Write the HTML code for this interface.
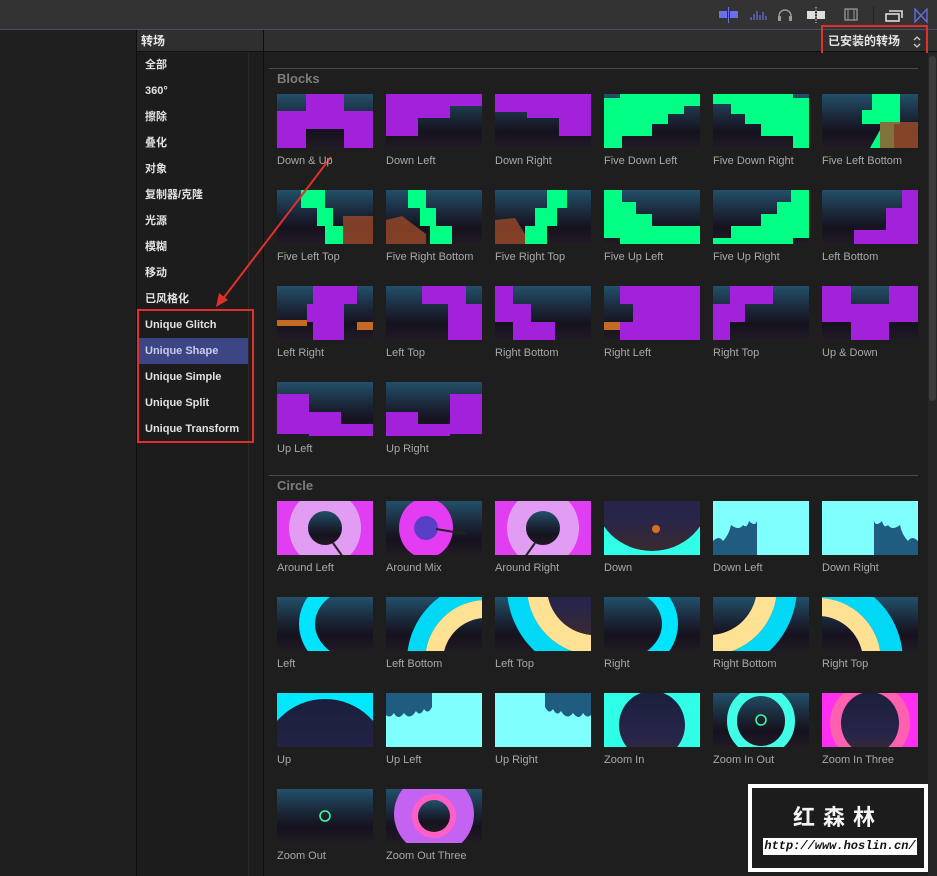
<!DOCTYPE html>
<html><head><meta charset="utf-8"><style>
*{margin:0;padding:0;box-sizing:border-box}
body{width:937px;height:876px;overflow:hidden;background:#1e1e1e;font-family:"Liberation Sans","Noto Sans CJK SC",sans-serif;position:relative}
.a{position:absolute}
.it{position:absolute;left:137px;width:111px;height:26px;line-height:26px;padding-left:8px;font-size:11px;color:#e2e2e2;font-weight:bold}
.lb{position:absolute;font-size:11px;color:#a9a9a9;white-space:nowrap}
</style></head><body>
<div class="a" style="left:0;top:0;width:937px;height:29px;background:#333"></div>
<div class="a" style="left:0;top:29px;width:937px;height:1px;background:#4a4d68"></div>
<svg class="a" style="left:715px;top:6px" width="222" height="18">
<g fill="#6a6ee8"><rect x="4" y="5" width="8" height="7"/><rect x="15" y="5" width="8" height="7"/><rect x="13" y="1" width="1" height="16"/></g>
<g stroke="#6a6ee8" stroke-width="1.2"><path d="M36 11v3M39 8v6M42 5v9M45 9v5M48 6v8M51 10v4"/></g>
<path d="M64 14v-4a6 6 0 0 1 12 0v4" stroke="#999" stroke-width="1.5" fill="none"/><rect x="63" y="10" width="3" height="5" fill="#999"/><rect x="74" y="10" width="3" height="5" fill="#999"/>
<g fill="#ddd"><rect x="92" y="5" width="8" height="8"/><rect x="102" y="5" width="8" height="8"/></g><path d="M101 1v16" stroke="#ddd" stroke-dasharray="1.5 1.5"/>
<rect x="130" y="3" width="12" height="11" fill="none" stroke="#999" stroke-width="1.3"/><path d="M133 3v11M139 3v11" stroke="#999"/>
<rect x="158" y="0" width="1" height="18" fill="#222"/>
<rect x="171" y="8" width="13" height="7" fill="none" stroke="#ddd" stroke-width="1.6"/><path d="M174 5h13v7" stroke="#ddd" stroke-width="1.6" fill="none"/>
<path d="M200 3v13l12-13v13z" stroke="#6a6ee8" stroke-width="1.3" fill="none"/>
</svg>
<div class="a" style="left:0;top:30px;width:136px;height:846px;background:#1f1f1f"></div>
<div class="a" style="left:136px;top:30px;width:1px;height:846px;background:#0e0e0e"></div>
<div class="a" style="left:137px;top:30px;width:126px;height:22px;background:#2f2f2f;border-bottom:1px solid #111;color:#e8e8e8;font-size:12px;line-height:22px;padding-left:4px;font-weight:bold">转场</div>
<div class="a" style="left:137px;top:53px;width:111px;height:823px;background:#1c1c1c"></div>
<div class="a" style="left:248px;top:53px;width:1px;height:823px;background:#2a2a2a"></div>
<div class="a" style="left:263px;top:30px;width:1px;height:846px;background:#0d0d0d"></div>
<div class="it" style="top:52px">全部</div>
<div class="it" style="top:78px">360°</div>
<div class="it" style="top:104px">擦除</div>
<div class="it" style="top:130px">叠化</div>
<div class="it" style="top:156px">对象</div>
<div class="it" style="top:182px">复制器/克隆</div>
<div class="it" style="top:208px">光源</div>
<div class="it" style="top:234px">模糊</div>
<div class="it" style="top:260px">移动</div>
<div class="it" style="top:286px">已风格化</div>
<div class="it" style="top:312px">Unique Glitch</div>
<div class="it" style="top:338px;background:#3c4685;color:#c8cce8">Unique Shape</div>
<div class="it" style="top:364px">Unique Simple</div>
<div class="it" style="top:390px">Unique Split</div>
<div class="it" style="top:416px">Unique Transform</div>
<div class="a" style="left:137px;top:309px;width:117px;height:134px;border:2px solid #e0302a"></div>
<div class="a" style="left:264px;top:30px;width:673px;height:22px;background:#2f2f2f;border-bottom:1px solid #111"></div>
<div class="a" style="left:828px;top:31px;font-size:12px;color:#e4e4e4;line-height:20px;font-weight:bold">已安装的转场</div>
<svg class="a" style="left:912px;top:34px" width="10" height="16"><path d="M2 6l3-3 3 3M2 10l3 3 3-3" stroke="#ccc" stroke-width="1.3" fill="none"/></svg>
<div class="a" style="left:821px;top:25px;width:107px;height:34px;border:2px solid #e0302a"></div>
<div class="a" style="left:264px;top:53px;width:664px;height:823px;background:#1e1e1e"></div>
<div class="a" style="left:928px;top:53px;width:9px;height:823px;background:#262626"></div>
<div class="a" style="left:929px;top:56px;width:7px;height:345px;background:#3c3c3c;border-radius:4px"></div>
<div class="a" style="left:269px;top:68px;width:649px;height:1px;background:#4a4a4a"></div>
<div class="a" style="left:277px;top:71px;font-size:13px;color:#7d7d7d;font-weight:bold">Blocks</div>
<div class="a" style="left:269px;top:475px;width:649px;height:1px;background:#4a4a4a"></div>
<div class="a" style="left:277px;top:478px;font-size:13px;color:#7d7d7d;font-weight:bold">Circle</div>

<svg class="a" style="left:0;top:0" width="937" height="876">
<defs>
<linearGradient id="n" x1="0" y1="0" x2="0" y2="1"><stop offset="0" stop-color="#22506a"/><stop offset=".45" stop-color="#1a2536"/><stop offset=".7" stop-color="#15121e"/><stop offset="1" stop-color="#221a24"/></linearGradient>
<linearGradient id="d" x1="0" y1="0" x2="0" y2="1"><stop offset="0" stop-color="#1a1f3c"/><stop offset=".7" stop-color="#28254a"/><stop offset="1" stop-color="#3a2a30"/></linearGradient>
</defs>
<svg x="277" y="94" width="96" height="54"><rect width="96" height="54" fill="url(#n)"/><path d="M29 0H67V17H96V54H67V35H29V54H0V17H29Z" fill="#a222dc"/></svg>
<svg x="386" y="94" width="96" height="54"><rect width="96" height="54" fill="url(#n)"/><path d="M0 0H96V12H64V24H32V42H0Z" fill="#a222dc"/></svg>
<svg x="495" y="94" width="96" height="54"><rect width="96" height="54" fill="url(#n)"/><path d="M0 0H96V42H64V24H32V18H0Z" fill="#a222dc"/></svg>
<svg x="604" y="94" width="96" height="54"><rect width="96" height="54" fill="url(#n)"/><path d="M0 4H16V0H96V12H80V20H64V30H48V42H18V54H0Z" fill="#00ff84"/></svg>
<svg x="713" y="94" width="96" height="54"><rect width="96" height="54" fill="url(#n)"/><path d="M0 0H80V4H96V54H80V42H48V30H32V20H18V10H0Z" fill="#00ff84"/></svg>
<svg x="822" y="94" width="96" height="54"><rect width="96" height="54" fill="url(#n)"/><path d="M40 30H58V54H72V30H78V0H66V0H50V16H40Z" fill="#00ff84"/><rect x="58" y="28" width="38" height="26" fill="#a0502a" opacity=".8"/><path d="M48 54L58 36V54Z" fill="#00ff84"/></svg>
<svg x="277" y="190" width="96" height="54"><rect width="96" height="54" fill="url(#n)"/><path d="M24 0H48V18H56V36H66V54H48V36H40V18H24Z" fill="#00ff84"/><rect x="66" y="26" width="30" height="28" fill="#9a4a28" opacity=".8"/></svg>
<svg x="386" y="190" width="96" height="54"><rect width="96" height="54" fill="url(#n)"/><path d="M22 0H40V18H50V36H66V54H44V36H34V18H22Z" fill="#00ff84"/><path d="M0 30L16 26 40 44V54H0Z" fill="#9a4a28" opacity=".8"/></svg>
<svg x="495" y="190" width="96" height="54"><rect width="96" height="54" fill="url(#n)"/><path d="M52 0H72V18H62V36H52V54H30V36H40V18H52Z" fill="#00ff84"/><path d="M0 30L20 28 30 44V54H0Z" fill="#9a4a28" opacity=".8"/></svg>
<svg x="604" y="190" width="96" height="54"><rect width="96" height="54" fill="url(#n)"/><path d="M0 0H18V12H32V24H48V36H96V54H16V48H0Z" fill="#00ff84"/></svg>
<svg x="713" y="190" width="96" height="54"><rect width="96" height="54" fill="url(#n)"/><path d="M78 0H96V48H80V54H0V48H18V36H48V24H64V12H78Z" fill="#00ff84"/></svg>
<svg x="822" y="190" width="96" height="54"><rect width="96" height="54" fill="url(#n)"/><path d="M80 0H96V54H32V40H64V18H80Z" fill="#a222dc"/></svg>
<svg x="277" y="286" width="96" height="54"><rect width="96" height="54" fill="url(#n)"/><path d="M36 0H80V18H67V54H36V36H30V18H36Z" fill="#a222dc"/><rect x="0" y="34" width="30" height="6" fill="#c46a22"/><rect x="80" y="36" width="16" height="8" fill="#c46a22"/></svg>
<svg x="386" y="286" width="96" height="54"><rect width="96" height="54" fill="url(#n)"/><path d="M36 0H80V18H96V54H62V36H62V18H36Z" fill="#a222dc"/></svg>
<svg x="495" y="286" width="96" height="54"><rect width="96" height="54" fill="url(#n)"/><path d="M0 0H18V18H36V36H60V54H18V36H0Z" fill="#a222dc"/></svg>
<svg x="604" y="286" width="96" height="54"><rect width="96" height="54" fill="url(#n)"/><path d="M16 0H96V54H16V36H29V18H16Z" fill="#a222dc"/><rect x="0" y="36" width="16" height="8" fill="#c46a22"/></svg>
<svg x="713" y="286" width="96" height="54"><rect width="96" height="54" fill="url(#n)"/><path d="M17 0H60V18H32V36H17V54H0V18H17Z" fill="#a222dc"/></svg>
<svg x="822" y="286" width="96" height="54"><rect width="96" height="54" fill="url(#n)"/><path d="M0 0H29V18H67V0H96V36H67V54H29V36H0Z" fill="#a222dc"/></svg>
<svg x="277" y="382" width="96" height="54"><rect width="96" height="54" fill="url(#n)"/><path d="M0 12H32V30H64V42H96V54H32V52H0Z" fill="#a222dc"/></svg>
<svg x="386" y="382" width="96" height="54"><rect width="96" height="54" fill="url(#n)"/><path d="M0 54V30H32V42H64V12H96V52H64V54Z" fill="#a222dc"/></svg>
<svg x="277" y="501" width="96" height="54"><rect width="96" height="54" fill="#e13ef4"/><ellipse cx="48" cy="27" rx="36" ry="38" fill="#e39cf4"/><circle cx="48" cy="27" r="17" fill="url(#n)"/><path d="M56 42L66 56" stroke="#222" stroke-width="2"/></svg>
<svg x="386" y="501" width="96" height="54"><rect width="96" height="54" fill="url(#n)"/><ellipse cx="40" cy="27" rx="27" ry="30" fill="#e33cf2"/><circle cx="40" cy="27" r="12" fill="#5a3ec8"/><path d="M50 28L80 33" stroke="#222" stroke-width="2"/></svg>
<svg x="495" y="501" width="96" height="54"><rect width="96" height="54" fill="#e13ef4"/><ellipse cx="48" cy="27" rx="36" ry="38" fill="#e39cf4"/><circle cx="48" cy="27" r="17" fill="url(#n)"/><path d="M40 42L30 56" stroke="#222" stroke-width="2"/></svg>
<svg x="604" y="501" width="96" height="54"><rect width="96" height="54" fill="#30ffe8"/><ellipse cx="48" cy="-6" rx="58" ry="56" fill="url(#d)"/><circle cx="52" cy="28" r="4" fill="#d07020"/></svg>
<svg x="713" y="501" width="96" height="54"><rect width="96" height="54" fill="#80ffff"/><path d="M0 54V40Q6 34 10 40Q16 34 18 24Q26 30 30 24Q34 28 36 20Q42 26 44 20V54Z" fill="#1f5c80"/></svg>
<svg x="822" y="501" width="96" height="54"><rect width="96" height="54" fill="#80ffff"/><path d="M96 54V40Q90 34 86 40Q80 34 78 24Q70 30 66 24Q62 28 60 20Q54 26 52 20V54Z" fill="#1f5c80"/></svg>
<svg x="277" y="597" width="96" height="54"><rect width="96" height="54" fill="url(#n)"/><ellipse cx="82" cy="27" rx="52" ry="44" fill="none" stroke="#00e4ff" stroke-width="16"/></svg>
<svg x="386" y="597" width="96" height="54"><rect width="96" height="54" fill="url(#n)"/><circle cx="100" cy="64" r="70" fill="none" stroke="#00d8f6" stroke-width="18"/><circle cx="100" cy="64" r="52" fill="none" stroke="#ffe194" stroke-width="18"/></svg>
<svg x="495" y="597" width="96" height="54"><rect width="96" height="54" fill="url(#n)"/><circle cx="100" cy="-10" r="78" fill="none" stroke="#00d8f6" stroke-width="20"/><circle cx="100" cy="-10" r="58" fill="none" stroke="#ffe194" stroke-width="20"/><circle cx="100" cy="-10" r="48" fill="url(#d)"/></svg>
<svg x="604" y="597" width="96" height="54"><rect width="96" height="54" fill="url(#n)"/><ellipse cx="14" cy="27" rx="52" ry="44" fill="none" stroke="#00e4ff" stroke-width="16"/></svg>
<svg x="713" y="597" width="96" height="54"><rect width="96" height="54" fill="url(#n)"/><circle cx="-4" cy="-10" r="78" fill="none" stroke="#00d8f6" stroke-width="20"/><circle cx="-4" cy="-10" r="58" fill="none" stroke="#ffe194" stroke-width="20"/></svg>
<svg x="822" y="597" width="96" height="54"><rect width="96" height="54" fill="url(#n)"/><circle cx="-4" cy="64" r="74" fill="none" stroke="#00d8f6" stroke-width="22"/><circle cx="-4" cy="64" r="54" fill="none" stroke="#ffe194" stroke-width="18"/></svg>
<svg x="277" y="693" width="96" height="54"><rect width="96" height="54" fill="#00e8ff"/><ellipse cx="48" cy="66" rx="62" ry="60" fill="url(#d)"/></svg>
<svg x="386" y="693" width="96" height="54"><rect width="96" height="54" fill="#80ffff"/><path d="M0 0H46V14Q42 22 38 16Q34 24 30 18Q24 28 18 20Q12 28 8 20Q4 26 0 22Z" fill="#1f5c80"/></svg>
<svg x="495" y="693" width="96" height="54"><rect width="96" height="54" fill="#80ffff"/><path d="M96 0H50V14Q54 22 58 16Q62 24 66 18Q72 28 78 20Q84 28 88 20Q92 26 96 22Z" fill="#1f5c80"/></svg>
<svg x="604" y="693" width="96" height="54"><rect width="96" height="54" fill="#30ffe8"/><ellipse cx="48" cy="32" rx="33" ry="34" fill="url(#d)"/></svg>
<svg x="713" y="693" width="96" height="54"><rect width="96" height="54" fill="url(#n)"/><ellipse cx="48" cy="28" rx="29" ry="30" fill="none" stroke="#40ffe6" stroke-width="10"/><circle cx="48" cy="27" r="5" fill="none" stroke="#40ff9a" stroke-width="1.5"/></svg>
<svg x="822" y="693" width="96" height="54"><rect width="96" height="54" fill="#ff30f0"/><ellipse cx="48" cy="30" rx="40" ry="40" fill="#ff60b0"/><ellipse cx="48" cy="30" rx="29" ry="31" fill="url(#d)"/></svg>
<svg x="277" y="789" width="96" height="54"><rect width="96" height="54" fill="url(#n)"/><circle cx="48" cy="27" r="5" fill="none" stroke="#40ffa0" stroke-width="1.5"/></svg>
<svg x="386" y="789" width="96" height="54"><rect width="96" height="54" fill="url(#n)"/><ellipse cx="48" cy="25" rx="40" ry="40" fill="#c462f2"/><circle cx="48" cy="27" r="22" fill="#ff5fc6"/><circle cx="48" cy="27" r="16" fill="url(#n)"/></svg>
<path d="M331 157L222 300" stroke="#e0302a" stroke-width="2"/>
<path d="M216 307L219 293 228 300Z" fill="#e0302a"/>
</svg>

<div class="lb" style="left:277px;top:155px">Down &amp; Up</div>
<div class="lb" style="left:386px;top:155px">Down Left</div>
<div class="lb" style="left:495px;top:155px">Down Right</div>
<div class="lb" style="left:604px;top:155px">Five Down Left</div>
<div class="lb" style="left:713px;top:155px">Five Down Right</div>
<div class="lb" style="left:822px;top:155px">Five Left Bottom</div>
<div class="lb" style="left:277px;top:251px">Five Left Top</div>
<div class="lb" style="left:386px;top:251px">Five Right Bottom</div>
<div class="lb" style="left:495px;top:251px">Five Right Top</div>
<div class="lb" style="left:604px;top:251px">Five Up Left</div>
<div class="lb" style="left:713px;top:251px">Five Up Right</div>
<div class="lb" style="left:822px;top:251px">Left Bottom</div>
<div class="lb" style="left:277px;top:347px">Left Right</div>
<div class="lb" style="left:386px;top:347px">Left Top</div>
<div class="lb" style="left:495px;top:347px">Right Bottom</div>
<div class="lb" style="left:604px;top:347px">Right Left</div>
<div class="lb" style="left:713px;top:347px">Right Top</div>
<div class="lb" style="left:822px;top:347px">Up &amp; Down</div>
<div class="lb" style="left:277px;top:443px">Up Left</div>
<div class="lb" style="left:386px;top:443px">Up Right</div>
<div class="lb" style="left:277px;top:562px">Around Left</div>
<div class="lb" style="left:386px;top:562px">Around Mix</div>
<div class="lb" style="left:495px;top:562px">Around Right</div>
<div class="lb" style="left:604px;top:562px">Down</div>
<div class="lb" style="left:713px;top:562px">Down Left</div>
<div class="lb" style="left:822px;top:562px">Down Right</div>
<div class="lb" style="left:277px;top:658px">Left</div>
<div class="lb" style="left:386px;top:658px">Left Bottom</div>
<div class="lb" style="left:495px;top:658px">Left Top</div>
<div class="lb" style="left:604px;top:658px">Right</div>
<div class="lb" style="left:713px;top:658px">Right Bottom</div>
<div class="lb" style="left:822px;top:658px">Right Top</div>
<div class="lb" style="left:277px;top:754px">Up</div>
<div class="lb" style="left:386px;top:754px">Up Left</div>
<div class="lb" style="left:495px;top:754px">Up Right</div>
<div class="lb" style="left:604px;top:754px">Zoom In</div>
<div class="lb" style="left:713px;top:754px">Zoom In Out</div>
<div class="lb" style="left:822px;top:754px">Zoom In Three</div>
<div class="lb" style="left:277px;top:850px">Zoom Out</div>
<div class="lb" style="left:386px;top:850px">Zoom Out Three</div>

<div class="a" style="left:748px;top:784px;width:180px;height:88px;background:#fff;padding:4px">
<div style="width:100%;height:100%;background:#1c1c1c;position:relative">
<div class="a" style="left:0;width:100%;top:12px;text-align:center;color:#f4f4f4;font-size:22px;font-weight:bold;letter-spacing:8px;font-family:'WenQuanYi Zen Hei','Noto Sans CJK SC',sans-serif">红森林</div>
<div class="a" style="left:11px;top:50px;width:154px;height:17px;background:#fff;color:#111;font-family:'Liberation Mono',monospace;font-style:italic;font-weight:bold;font-size:12px;line-height:17px;text-align:center">http://www.hoslin.cn/</div>
</div></div>
</body></html>
